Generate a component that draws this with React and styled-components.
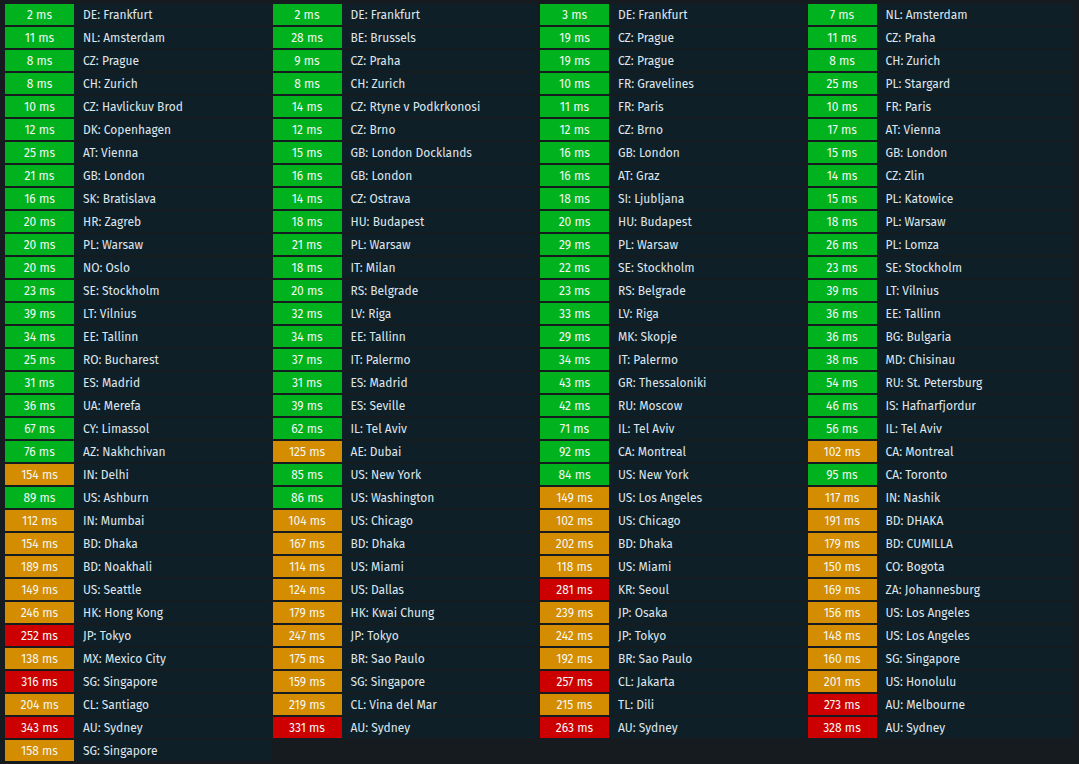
import React from "react";
import styled, { createGlobalStyle } from "styled-components";

const GlobalStyle = createGlobalStyle`
  html, body {
    margin: 0;
    padding: 0;
    background: #161b1f;
  }
  body {
    font-family: "Fira Sans", "Open Sans", "Noto Sans", sans-serif;
  }
`;

const columns = [
  [
    [2, "DE: Frankfurt"], [11, "NL: Amsterdam"], [8, "CZ: Prague"], [8, "CH: Zurich"],
    [10, "CZ: Havlickuv Brod"], [12, "DK: Copenhagen"], [25, "AT: Vienna"], [21, "GB: London"],
    [16, "SK: Bratislava"], [20, "HR: Zagreb"], [20, "PL: Warsaw"], [20, "NO: Oslo"],
    [23, "SE: Stockholm"], [39, "LT: Vilnius"], [34, "EE: Tallinn"], [25, "RO: Bucharest"],
    [31, "ES: Madrid"], [36, "UA: Merefa"], [67, "CY: Limassol"], [76, "AZ: Nakhchivan"],
    [154, "IN: Delhi"], [89, "US: Ashburn"], [112, "IN: Mumbai"], [154, "BD: Dhaka"],
    [189, "BD: Noakhali"], [149, "US: Seattle"], [246, "HK: Hong Kong"], [252, "JP: Tokyo"],
    [138, "MX: Mexico City"], [316, "SG: Singapore"], [204, "CL: Santiago"], [343, "AU: Sydney"],
    [158, "SG: Singapore"],
  ],
  [
    [2, "DE: Frankfurt"], [28, "BE: Brussels"], [9, "CZ: Praha"], [8, "CH: Zurich"],
    [14, "CZ: Rtyne v Podkrkonosi"], [12, "CZ: Brno"], [15, "GB: London Docklands"], [16, "GB: London"],
    [14, "CZ: Ostrava"], [18, "HU: Budapest"], [21, "PL: Warsaw"], [18, "IT: Milan"],
    [20, "RS: Belgrade"], [32, "LV: Riga"], [34, "EE: Tallinn"], [37, "IT: Palermo"],
    [31, "ES: Madrid"], [39, "ES: Seville"], [62, "IL: Tel Aviv"], [125, "AE: Dubai"],
    [85, "US: New York"], [86, "US: Washington"], [104, "US: Chicago"], [167, "BD: Dhaka"],
    [114, "US: Miami"], [124, "US: Dallas"], [179, "HK: Kwai Chung"], [247, "JP: Tokyo"],
    [175, "BR: Sao Paulo"], [159, "SG: Singapore"], [219, "CL: Vina del Mar"], [331, "AU: Sydney"],
  ],
  [
    [3, "DE: Frankfurt"], [19, "CZ: Prague"], [19, "CZ: Prague"], [10, "FR: Gravelines"],
    [11, "FR: Paris"], [12, "CZ: Brno"], [16, "GB: London"], [16, "AT: Graz"],
    [18, "SI: Ljubljana"], [20, "HU: Budapest"], [29, "PL: Warsaw"], [22, "SE: Stockholm"],
    [23, "RS: Belgrade"], [33, "LV: Riga"], [29, "MK: Skopje"], [34, "IT: Palermo"],
    [43, "GR: Thessaloniki"], [42, "RU: Moscow"], [71, "IL: Tel Aviv"], [92, "CA: Montreal"],
    [84, "US: New York"], [149, "US: Los Angeles"], [102, "US: Chicago"], [202, "BD: Dhaka"],
    [118, "US: Miami"], [281, "KR: Seoul"], [239, "JP: Osaka"], [242, "JP: Tokyo"],
    [192, "BR: Sao Paulo"], [257, "CL: Jakarta"], [215, "TL: Dili"], [263, "AU: Sydney"],
  ],
  [
    [7, "NL: Amsterdam"], [11, "CZ: Praha"], [8, "CH: Zurich"], [25, "PL: Stargard"],
    [10, "FR: Paris"], [17, "AT: Vienna"], [15, "GB: London"], [14, "CZ: Zlin"],
    [15, "PL: Katowice"], [18, "PL: Warsaw"], [26, "PL: Lomza"], [23, "SE: Stockholm"],
    [39, "LT: Vilnius"], [36, "EE: Tallinn"], [36, "BG: Bulgaria"], [38, "MD: Chisinau"],
    [54, "RU: St. Petersburg"], [46, "IS: Hafnarfjordur"], [56, "IL: Tel Aviv"], [102, "CA: Montreal"],
    [95, "CA: Toronto"], [117, "IN: Nashik"], [191, "BD: DHAKA"], [179, "BD: CUMILLA"],
    [150, "CO: Bogota"], [169, "ZA: Johannesburg"], [156, "US: Los Angeles"], [148, "US: Los Angeles"],
    [160, "SG: Singapore"], [201, "US: Honolulu"], [273, "AU: Melbourne"], [328, "AU: Sydney"],
  ],
];

const levelColors = {
  good: "#00b31e",
  mid: "#d48c00",
  bad: "#cc0000",
};

const levelOf = (ms) => (ms >= 250 ? "bad" : ms >= 100 ? "mid" : "good");

const Board = styled.div`
  display: grid;
  grid-template-columns: repeat(4, 1fr);
  column-gap: 2px;
  padding: 4px 6px 4px 5px;
  align-items: start;
`;

const Column = styled.div`
  display: flex;
  flex-direction: column;
  gap: 2px;
`;

const Row = styled.div`
  display: flex;
  align-items: center;
  height: 21px;
  background: #0f1f28;
`;

const Ping = styled.div`
  flex: 0 0 69px;
  height: 100%;
  display: flex;
  align-items: center;
  justify-content: center;
  background: ${(p) => levelColors[p.$level]};
  color: #f4f7f4;
  font-size: 12px;
`;

const Place = styled.div`
  padding-left: 9px;
  color: #dfe6ec;
  font-size: 12px;
  white-space: nowrap;
`;

export default function App() {
  return (
    <>
      <GlobalStyle />
      <Board>
        {columns.map((col, ci) => (
          <Column key={ci}>
            {col.map(([ms, name], i) => (
              <Row key={i}>
                <Ping $level={levelOf(ms)}>{ms} ms</Ping>
                <Place>{name}</Place>
              </Row>
            ))}
          </Column>
        ))}
      </Board>
    </>
  );
}
